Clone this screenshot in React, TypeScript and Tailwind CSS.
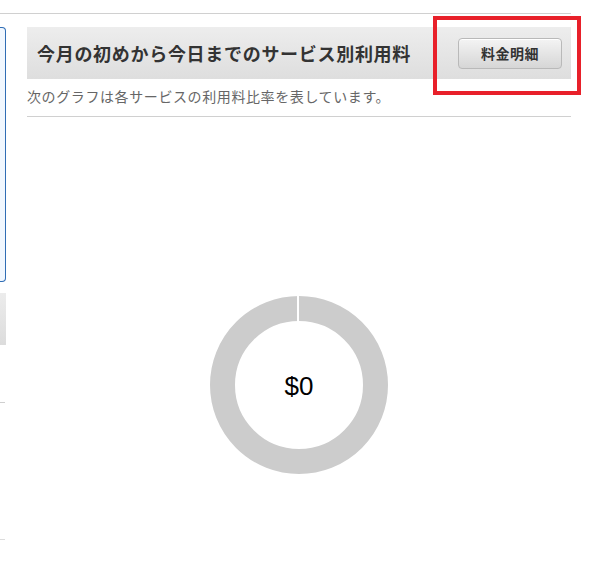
export default function App() {
  return (
    <div className="relative w-[591px] h-[581px] overflow-hidden bg-white font-['Noto_Sans_CJK_JP','Noto_Sans',sans-serif] text-[#333]">
      {/* top divider */}
      <div className="pt-[13px] w-[571px]">
        <div className="h-px bg-[#d0d0d0]" />
      </div>

      <div className="flex mt-[13px]">
        {/* left sidebar edge */}
        <div className="w-[6px] flex flex-col">
          <div className="h-[255px] border-y border-r border-[#2f6db5] rounded-r-[4px] bg-[#f0f7ff]" />
          <div className="mt-[11px] h-[52px] bg-gradient-to-b from-[#ececec] to-[#dcdcdc]" />
          <div className="mt-[57px] h-px w-[5px] bg-[#cfcfcf]" />
          <div className="mt-[136px] h-px w-[5px] bg-[#dcdcdc]" />
        </div>

        {/* main panel */}
        <div className="ml-[21px] w-[544px] flex flex-col">
          <div className="h-[52px] flex items-center justify-between pl-[10px] pr-[9px] bg-gradient-to-b from-[#ededed] to-[#dedede]">
            <h2 className="text-[18px] font-bold tracking-[0.7px] text-[#333]">今月の初めから今日までのサービス別利用料</h2>
            <button className="w-[104px] h-[31px] rounded-[4px] border border-[#b9b9b9] bg-gradient-to-b from-[#f4f4f4] to-[#d6d6d6] text-[14px] font-bold tracking-[0.5px] text-[#333] shadow-[inset_0_1px_0_#fff]">
              料金明細
            </button>
          </div>
          <p className="mt-[7px] text-[14px] leading-[20px] tracking-[0.6px] text-[#666]">次のグラフは各サービスの利用料比率を表しています。</p>
          <div className="mt-[10px] h-px bg-[#d0d0d0]" />

          {/* donut chart */}
          <div className="mt-[178px] flex justify-center">
            <div className="relative w-[180px] h-[180px]">
              <svg width="180" height="180" viewBox="0 0 180 180">
                <circle cx="90" cy="90" r="76.5" fill="none" stroke="#cccccc" strokeWidth="25" />
                <line x1="89" y1="0" x2="89" y2="28" stroke="#ffffff" strokeWidth="2" />
              </svg>
              <div className="absolute inset-0 flex items-center justify-center pt-[2px] font-['Liberation_Sans',Arial,sans-serif] text-[26px] text-black">
                $0
              </div>
            </div>
          </div>
        </div>
      </div>

      {/* highlight annotation around the button */}
      <div className="absolute left-[433px] top-[16px] w-[148px] h-[79px] border-[4px] border-[#e8202a]" />
    </div>
  );
}
